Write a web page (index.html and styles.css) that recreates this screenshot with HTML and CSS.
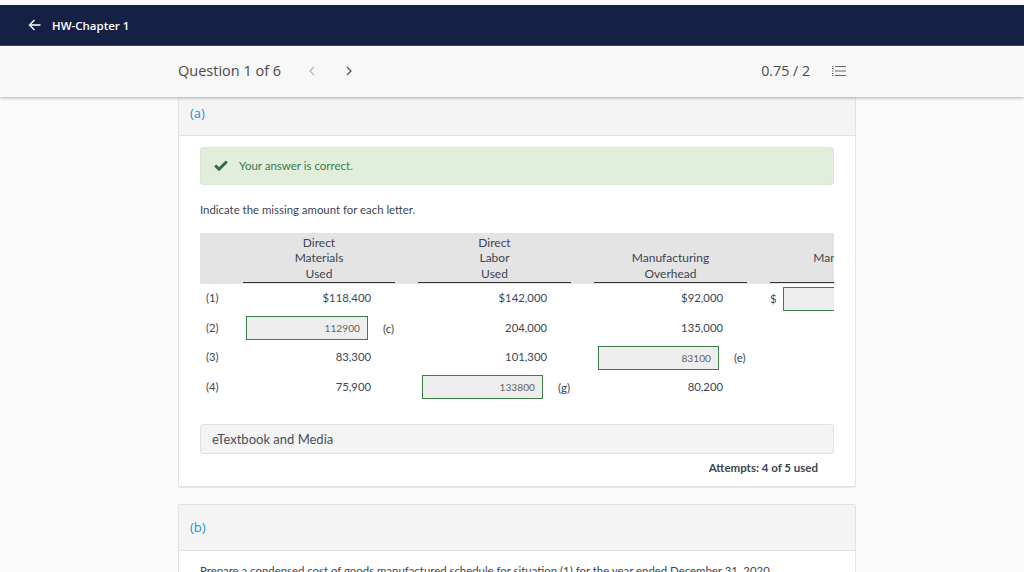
FILE: index.html
```html
<!DOCTYPE html>
<html lang="en">
<head>
<meta charset="utf-8">
<title>HW-Chapter 1</title>
<link rel="stylesheet" href="styles.css">
</head>
<body>
<header class="topbar">
  <svg class="back" width="14" height="12" viewBox="0 0 14 12"><path d="M12.500 6H1.500M6.500 1L1.500 6l5 5" fill="none" stroke="#fff" stroke-width="1.400"/></svg>
  <span class="hw-title">HW-Chapter 1</span>
</header>
<nav class="toolbar">
  <div class="toolbar-inner">
    <span class="q-title">Question 1 of 6</span>
    <svg class="prev" width="7" height="10" viewBox="0 0 7 10"><path d="M6 1L2 5l4 4" fill="none" stroke="#b5b5b5" stroke-width="1.300"/></svg>
    <svg class="next" width="7" height="10" viewBox="0 0 7 10"><path d="M1 1l4 4-4 4" fill="none" stroke="#555" stroke-width="1.300"/></svg>
    <span class="score">0.75 / 2</span>
    <svg class="list" width="14" height="12" viewBox="0 0 14 12"><path d="M3 1.500h11M3 6h11M3 10.500h11" fill="none" stroke="#666" stroke-width="1"/><path d="M0 1h1.500v1H0zM0 3h1.500v1H0zM0 5.500h1.500v1H0zM0 8h1.500v1H0zM0 10h1.500v1H0z" fill="#666"/></svg>
  </div>
</nav>
<main class="content">
  <section class="card card-a">
    <div class="part-head part-head-a">(a)</div>
    <div class="part-body">
      <div class="alert">
        <svg class="check" width="14" height="11" viewBox="0 0 14 11"><path d="M1.200 5.500L5 9.200 12.800 1.500" fill="none" stroke="#2f6f3e" stroke-width="3"/></svg>
        <span>Your answer is correct.</span>
      </div>
      <p class="prompt">Indicate the missing amount for each letter.</p>
      <div class="table-clip">
        <div class="grid">
          <div class="head"></div>
          <div class="head"><span class="head-text">Direct<br>Materials<br>Used</span></div>
          <div class="head"><span class="head-text">Direct<br>Labor<br>Used</span></div>
          <div class="head"><span class="head-text">Manufacturing<br>Overhead</span></div>
          <div class="head"><span class="head-text">Manufacturing<br>&nbsp;</span></div>

          <div class="label">(1)</div>
          <div class="val">$118,400</div>
          <div class="val">$142,000</div>
          <div class="val">$92,000</div>
          <div class="cell-last"><span class="dollar">$</span><span class="input input-empty"></span></div>

          <div class="label">(2)</div>
          <div class="cell-input"><span class="input">112900</span><span class="letter">(c)</span></div>
          <div class="val">204,000</div>
          <div class="val">135,000</div>
          <div></div>

          <div class="label">(3)</div>
          <div class="val">83,300</div>
          <div class="val">101,300</div>
          <div class="cell-input cell-input-narrow"><span class="input">83100</span><span class="letter">(e)</span></div>
          <div></div>

          <div class="label">(4)</div>
          <div class="val">75,900</div>
          <div class="cell-input cell-input-narrow"><span class="input">133800</span><span class="letter">(g)</span></div>
          <div class="val">80,200</div>
          <div></div>
        </div>
      </div>
      <div class="etext">eTextbook and Media</div>
      <div class="attempts">Attempts: 4 of 5 used</div>
    </div>
  </section>
  <section class="card card-b">
    <div class="part-head part-head-b">(b)</div>
    <p class="prompt-b">Prepare a condensed cost of goods manufactured schedule for situation (1) for the year ended December 31, 2020.</p>
  </section>
</main>
</body>
</html>
```
FILE: styles.css
```css
* { box-sizing: border-box; }
html, body { margin: 0; height: 572px; overflow: hidden; }
body {
  background: #fafafa;
  font-family: "Lato", "Liberation Sans", sans-serif;
  color: #3d4550;
  padding-top: 5px;
}
.topbar {
  height: 41px;
  background: #142144;
  border-bottom: 1px solid #3a4663;
  display: flex;
  align-items: center;
  padding-left: 28px;
  color: #fff;
}
.hw-title {
  font-family: "Open Sans", sans-serif;
  font-size: 11.500px;
  font-weight: 600;
  margin-left: 10px;
}
.toolbar {
  height: 51px;
  background: #f8f8f8;
  box-shadow: 0 1px 3px rgba(0,0,0,.3);
  position: relative;
  z-index: 2;
}
.toolbar-inner {
  width: 668px;
  margin-left: 178px;
  height: 100%;
  padding-bottom: 2px;
  display: flex;
  align-items: center;
  font-family: "Open Sans", sans-serif;
  color: #4a4a4a;
}
.q-title { font-size: 14.500px; }
.prev { margin-left: 27px; }
.next { margin-left: 31px; }
.score { font-size: 14.200px; margin-left: auto; }
.list { margin-left: 22px; }
.content { display: flex; flex-direction: column; gap: 17px; width: 678px; margin-left: 178px; }
.card {
  background: #fff;
  border: 1px solid #e2e2e2;
  border-radius: 2px;
  box-shadow: 0 1px 1px rgba(0,0,0,.08);
}
.card-a { height: 390px; border-top: 0; }
.part-head {
  background: #f4f4f4;
  border-bottom: 1px solid #e2e2e2;
  padding-left: 11px;
  display: flex;
  align-items: center;
  font-family: "Open Sans", sans-serif;
  font-size: 13px;
  color: #1a8fdc;
}
.part-head-a { height: 39px; padding-bottom: 7px; }
.part-head-b { height: 46px; padding-bottom: 1px; }
.part-body { padding: 12px 21px 0; }
.alert {
  height: 38px;
  margin-top: -1px;
  background: #e0eedb;
  border: 1px solid #d8e8d2;
  border-radius: 3px;
  display: flex;
  align-items: center;
  padding: 0 0 2px 13px;
  gap: 11px;
  font-size: 11.500px;
  color: #3d7a4a;
}
.prompt { margin: 17px 0 0; font-size: 11.400px; line-height: 16px; color: #3d4550; }
.table-clip { margin-top: 15px; width: 634px; overflow: hidden; }
.grid {
  display: grid;
  grid-template-columns: 43px 175px 176px 176px 187px;
  width: 757px;
  grid-template-rows: 51px 29px 30px 29px 30px;
  font-size: 11.300px;
}
.head {
  background: #e4e4e4;
  display: flex;
  align-items: flex-end;
  padding-right: 23px;
  padding-bottom: 1px;
  font-size: 12px;
}
.head-text {
  display: block;
  width: 100%;
  text-align: center;
  line-height: 15.500px;
  border-bottom: 1px solid #333;
  padding-bottom: 1px;
  color: #3d4550;
}
.label { display: flex; align-items: center; padding: 0 0 2px 6px; white-space: nowrap; }
.val { display: flex; align-items: center; justify-content: flex-end; padding: 0 47px 2px 0; }
.cell-input { display: flex; align-items: center; padding-left: 3px; gap: 15px; white-space: nowrap; }
.cell-input-narrow { padding-left: 4px; }
.cell-input-narrow .input { width: 121px; }
.cell-last { display: flex; align-items: center; gap: 6px; }
.input {
  width: 122px;
  height: 24px;
  background: #eeeeee;
  border: 1px solid #3e7d46;
  display: flex;
  align-items: center;
  justify-content: flex-end;
  padding-right: 7px;
  font-size: 10.200px;
  color: #666;
  flex: none;
}
.letter { font-size: 11.500px; }
.etext {
  margin-top: 22px;
  height: 30px;
  background: #f4f4f4;
  border: 1px solid #e2e2e2;
  border-radius: 3px;
  display: flex;
  align-items: center;
  padding-left: 11px;
  font-size: 13px;
  color: #4a4f57;
}
.attempts {
  margin-top: 6px;
  text-align: right;
  padding-right: 16px;
  font-size: 11.500px;
  font-weight: 700;
  line-height: 16px;
  color: #3d4550;
}
.prompt-b { margin: 12px 0 0 21px; font-size: 11.400px; line-height: 16px; color: #3d4550; white-space: nowrap; }
```
